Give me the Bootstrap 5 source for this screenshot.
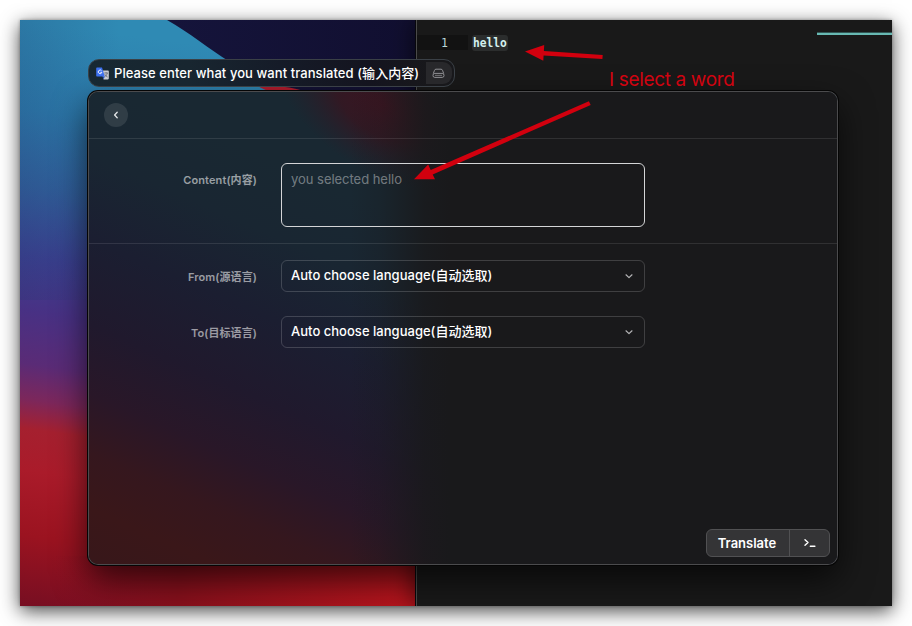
<!DOCTYPE html>
<html lang="en" data-bs-theme="dark">
<head>
<meta charset="utf-8">
<meta name="viewport" content="width=device-width, initial-scale=1">
<title>Translate</title>
<link href="https://cdn.jsdelivr.net/npm/bootstrap@5.3.0/dist/css/bootstrap.min.css" rel="stylesheet">
<style>
body{background:#fff;width:912px;height:626px;overflow:hidden;font-family:Inter,"Noto Sans CJK SC",sans-serif;font-size:13px;line-height:20px;color:#fff}
.desktop{width:872px;height:586px;margin:20px;box-shadow:0 5px 18px rgba(0,0,0,.72),0 0 3px rgba(0,0,0,.3);background:#191919}
.wallpaper{left:0;top:0}
.editor{left:396px;top:0;width:476px;height:586px;background:#191919;border-left:1px solid #4a4a4a;box-shadow:-1px 0 0 #08080c,-3px 0 22px rgba(0,0,0,.55);font-family:"DejaVu Sans Mono","Liberation Mono",monospace;font-size:11px;line-height:16px;color:#cfeeec}
.code-line{margin-top:15px;height:15px}
.gutter{width:51px;background:#121212;padding-right:20px;text-align:right;color:#b7d6d8;font-size:11.5px}
.word{background:#2b2d2d;border-radius:3px;margin-left:4px;width:36px;font-weight:700;font-size:11.5px;color:#d4f0ee;height:16px}
.word span{display:inline-block;transform:scaleX(.98);transform-origin:0 50%;padding-left:1px;letter-spacing:0}
.minimap-line{right:0;top:12px;width:75px;height:3px;background:#68b9b3;border-top:1px solid #315553}
.title-pill{left:68px;top:39px;width:367px;height:28px;border:1px solid #3a4046;border-radius:11px;background:linear-gradient(90deg,#172832 0,#182630 100px,#151b28 190px,#14141f 280px,#18181b 340px);font-weight:500;padding-left:7px}
.title-text{margin-left:5px;letter-spacing:.07px;width:306px}
.pill-tool{width:26px;height:22px;background:#28282b;border-radius:0 9px 9px 0;margin-left:6px;padding-right:2px}
.panel{left:68px;top:71px;width:750px;height:474px;border:1px solid rgba(255,255,255,.22);border-radius:10px;box-shadow:0 0 0 1px #050505,0 14px 34px rgba(0,0,0,.68);background:#19191b}
.panel-bg{left:0;top:0}
.panel-body{z-index:1}
.top-row{height:47px;padding-left:15px;border-bottom:1px solid rgba(255,255,255,.1)}
.back-btn{width:24px;height:24px;background:rgba(255,255,255,.1)}
.content-row{height:105px;padding-top:24px;border-bottom:1px solid rgba(255,255,255,.1)}
.field-label{width:168px;margin-right:24px;padding-top:2px;text-align:right;font-size:11px;font-weight:600;line-height:16px;letter-spacing:.1px;color:rgba(255,255,255,.56)}
.content-row .field-label{padding-top:9px}
.text-field{width:364px;height:64px;border:1px solid #d4d5d7;border-radius:6px;padding:5px 9px;color:rgba(255,255,255,.4);letter-spacing:-.03px}
.choice{width:364px;height:32px;border:1px solid rgba(255,255,255,.17);border-radius:6px;padding:0 10px 2px 9px;font-weight:500}
.choice span{letter-spacing:.02px}
.choice svg{margin-top:2px}
.select-row{margin-top:16px}
.select-row + .select-row{margin-top:24px}
.actions{margin:auto 7px 7px auto;height:28px;border:1px solid #515153;border-radius:6px;background:#343436;font-weight:600}
.translate{width:83px;padding-right:2px;border-right:1px solid #515153}
.terminal{width:39px}
.annotation{left:589px;top:48px;color:#d00310;font-size:19px;line-height:24px;font-weight:400;white-space:nowrap;letter-spacing:-.35px;z-index:4}
.arrows{left:0;top:0;z-index:3}
</style>
<script src="https://cdn.jsdelivr.net/npm/bootstrap@5.3.0/dist/js/bootstrap.bundle.min.js"></script>
</head>
<body>
<main class="desktop position-relative overflow-hidden">
  <svg class="wallpaper position-absolute" width="397" height="586" viewBox="20 20 397 586">
    <defs>
      <linearGradient id="sky" x1="20" y1="20" x2="-60" y2="600" gradientUnits="userSpaceOnUse">
        <stop offset="0" stop-color="#2f8ab4"/><stop offset=".15" stop-color="#2c7aab"/><stop offset=".28" stop-color="#31609c"/><stop offset=".4" stop-color="#3c3f90"/><stop offset=".49" stop-color="#483184"/><stop offset=".58" stop-color="#5a2b76"/><stop offset=".64" stop-color="#7c275b"/><stop offset=".69" stop-color="#a5202f"/><stop offset=".76" stop-color="#aa1b2a"/><stop offset=".87" stop-color="#9b1320"/><stop offset="1" stop-color="#740e22"/>
      </linearGradient>
      <linearGradient id="edge" x1="20" y1="0" x2="120" y2="0" gradientUnits="userSpaceOnUse"><stop offset="0" stop-color="#20386c" stop-opacity=".22"/><stop offset="1" stop-color="#20386c" stop-opacity="0"/></linearGradient>
      <linearGradient id="night" x1="0" y1="0" x2="1" y2="0"><stop offset="0" stop-color="#15143b"/><stop offset="1" stop-color="#110f30"/></linearGradient>
      <linearGradient id="ground" x1="50" y1="0" x2="417" y2="0" gradientUnits="userSpaceOnUse"><stop offset="0" stop-color="#850f20" stop-opacity="0"/><stop offset=".35" stop-color="#87101c"/><stop offset="1" stop-color="#b9151d"/></linearGradient>
    </defs>
    <rect x="20" y="20" width="397" height="586" fill="url(#sky)"/>
    <rect x="20" y="20" width="100" height="280" fill="url(#edge)"/>
    <path d="M167 20C190 33 209 49 230 62C247 72 263 82 276 91H417V20Z" fill="url(#night)"/>
    <path d="M255 85C275 85 292 87 307 92H270Z" fill="#b21c2d"/>
    <rect x="50" y="556" width="367" height="50" fill="url(#ground)"/>
  </svg>
  <section class="editor position-absolute">
    <div class="code-line d-flex"><div class="gutter">1</div><div class="word"><span>hello</span></div></div>
    <div class="minimap-line position-absolute"></div>
  </section>

  <section class="panel position-absolute overflow-hidden">
    <svg class="panel-bg position-absolute" width="748" height="472" viewBox="89 92 748 472">
      <defs>
        <linearGradient id="glass" x1="89" y1="80" x2="-94" y2="497" gradientUnits="userSpaceOnUse">
          <stop offset="0" stop-color="#192832"/><stop offset=".15" stop-color="#192632"/><stop offset=".32" stop-color="#1b1e31"/><stop offset=".49" stop-color="#20192d"/><stop offset=".63" stop-color="#291728"/><stop offset=".75" stop-color="#35171e"/><stop offset=".86" stop-color="#3a1719"/><stop offset="1" stop-color="#37171a"/>
        </linearGradient>
        <linearGradient id="fade" x1="350" y1="0" x2="450" y2="0" gradientUnits="userSpaceOnUse"><stop offset="0" stop-color="#19191b" stop-opacity="0"/><stop offset=".3" stop-color="#19191b" stop-opacity=".22"/><stop offset=".75" stop-color="#19191b" stop-opacity=".86"/><stop offset="1" stop-color="#19191b"/></linearGradient>
        <radialGradient id="glow" cx="0" cy="0" r="1" gradientUnits="userSpaceOnUse" gradientTransform="translate(385 105) rotate(32) scale(120 68)"><stop offset="0" stop-color="#3d1421"/><stop offset=".45" stop-color="#361621" stop-opacity=".85"/><stop offset="1" stop-color="#2a1c28" stop-opacity="0"/></radialGradient>
      </defs>
      <rect x="89" y="92" width="748" height="472" fill="url(#glass)"/>
      <rect x="240" y="92" width="300" height="150" fill="url(#glow)"/>
      <rect x="350" y="92" width="487" height="472" fill="url(#fade)"/>
    </svg>
    <div class="panel-body position-relative h-100 d-flex flex-column">
      <header class="top-row d-flex align-items-center">
        <div class="back-btn rounded-circle d-flex align-items-center justify-content-center"><svg width="8" height="10" viewBox="0 0 8 10" fill="none" stroke="#e2e5e7" stroke-width="1.3" stroke-linecap="round" stroke-linejoin="round"><path d="M5.2 2.2 2.6 5l2.6 2.8"/></svg></div>
      </header>
      <div class="content-row d-flex">
        <div class="field-label">Content(内容)</div>
        <div class="text-field">you selected hello</div>
      </div>
      <div class="select-row d-flex align-items-center">
        <div class="field-label">From(源语言)</div>
        <div class="choice d-flex align-items-center justify-content-between"><span>Auto choose language(自动选取)</span><svg width="10" height="8" viewBox="0 0 10 8" fill="none" stroke="#b5b5b7" stroke-width="1.2" stroke-linecap="round" stroke-linejoin="round"><path d="m2 2.8 3 2.8 3-2.8"/></svg></div>
      </div>
      <div class="select-row d-flex align-items-center">
        <div class="field-label">To(目标语言)</div>
        <div class="choice d-flex align-items-center justify-content-between"><span>Auto choose language(自动选取)</span><svg width="10" height="8" viewBox="0 0 10 8" fill="none" stroke="#b5b5b7" stroke-width="1.2" stroke-linecap="round" stroke-linejoin="round"><path d="m2 2.8 3 2.8 3-2.8"/></svg></div>
      </div>
      <div class="actions d-flex">
        <div class="translate d-flex align-items-center justify-content-center">Translate</div>
        <div class="terminal d-flex align-items-center justify-content-center"><svg width="14" height="12" viewBox="0 0 14 12" fill="none" stroke="#fff" stroke-width="1.4" stroke-linecap="round" stroke-linejoin="round"><path d="m2 2.7 3 2.8-3 2.8M7.3 9.2h4.6"/></svg></div>
      </div>
    </div>
  </section>

  <section class="title-pill position-absolute d-flex align-items-center">
    <svg width="13" height="13" viewBox="0 0 13 13"><path d="M5 3.4h7a.8.8 0 0 1 .8.8v7.4a.8.8 0 0 1-.8.8H7.6z" fill="#c9ccd2"/><path d="M1 .6h5l2.8 9H1a.8.8 0 0 1-.8-.8V1.4A.8.8 0 0 1 1 .6z" fill="#3d70ee"/><path d="m6.4 9.6h2.4l-1.2 2.7z" fill="#2450b5"/><path d="M5.6 3.9a1.8 1.8 0 1 0 .2 1.5H4.4" fill="none" stroke="#fff" stroke-width=".9"/><path d="M8.2 6h3.8M10.1 5.2V6M11.3 6c-.4 1.9-1.4 2.9-2.5 3.7M8.8 7.2c.6 1.3 1.4 2.1 2.8 2.8" fill="none" stroke="#62666e" stroke-width=".8"/></svg>
    <span class="title-text text-nowrap">Please enter what you want translated (输入内容)</span>
    <div class="pill-tool d-flex align-items-center justify-content-center"><svg width="13" height="11" viewBox="0 0 13 11" fill="none" stroke="#909094" stroke-width="1"><path d="M1.3 5.6 2.5 2.3Q2.9 1.2 4 1.2h5q1.1 0 1.5 1.1l1.2 3.3"/><rect x="1" y="5.4" width="11" height="4" rx="1.8"/><path d="M3 7.4h7" stroke-width=".7"/></svg></div>
  </section>

  <svg class="arrows position-absolute" width="872" height="586" viewBox="20 20 872 586" fill="#d2000e">
    <path d="M525 51.4 544.2 45l-.3 6.1 58.8 3.8-.3 4.2-58.8-3.6-.3 5.2z"/>
    <path d="M414 179.3 428.2 164.6l2.5 5.4 158.2-68.8 1.8 3.8-158 69.4 2.3 4.9z"/>
  </svg>
  <div class="annotation position-absolute">I select a word</div>
</main>
</body>
</html>
